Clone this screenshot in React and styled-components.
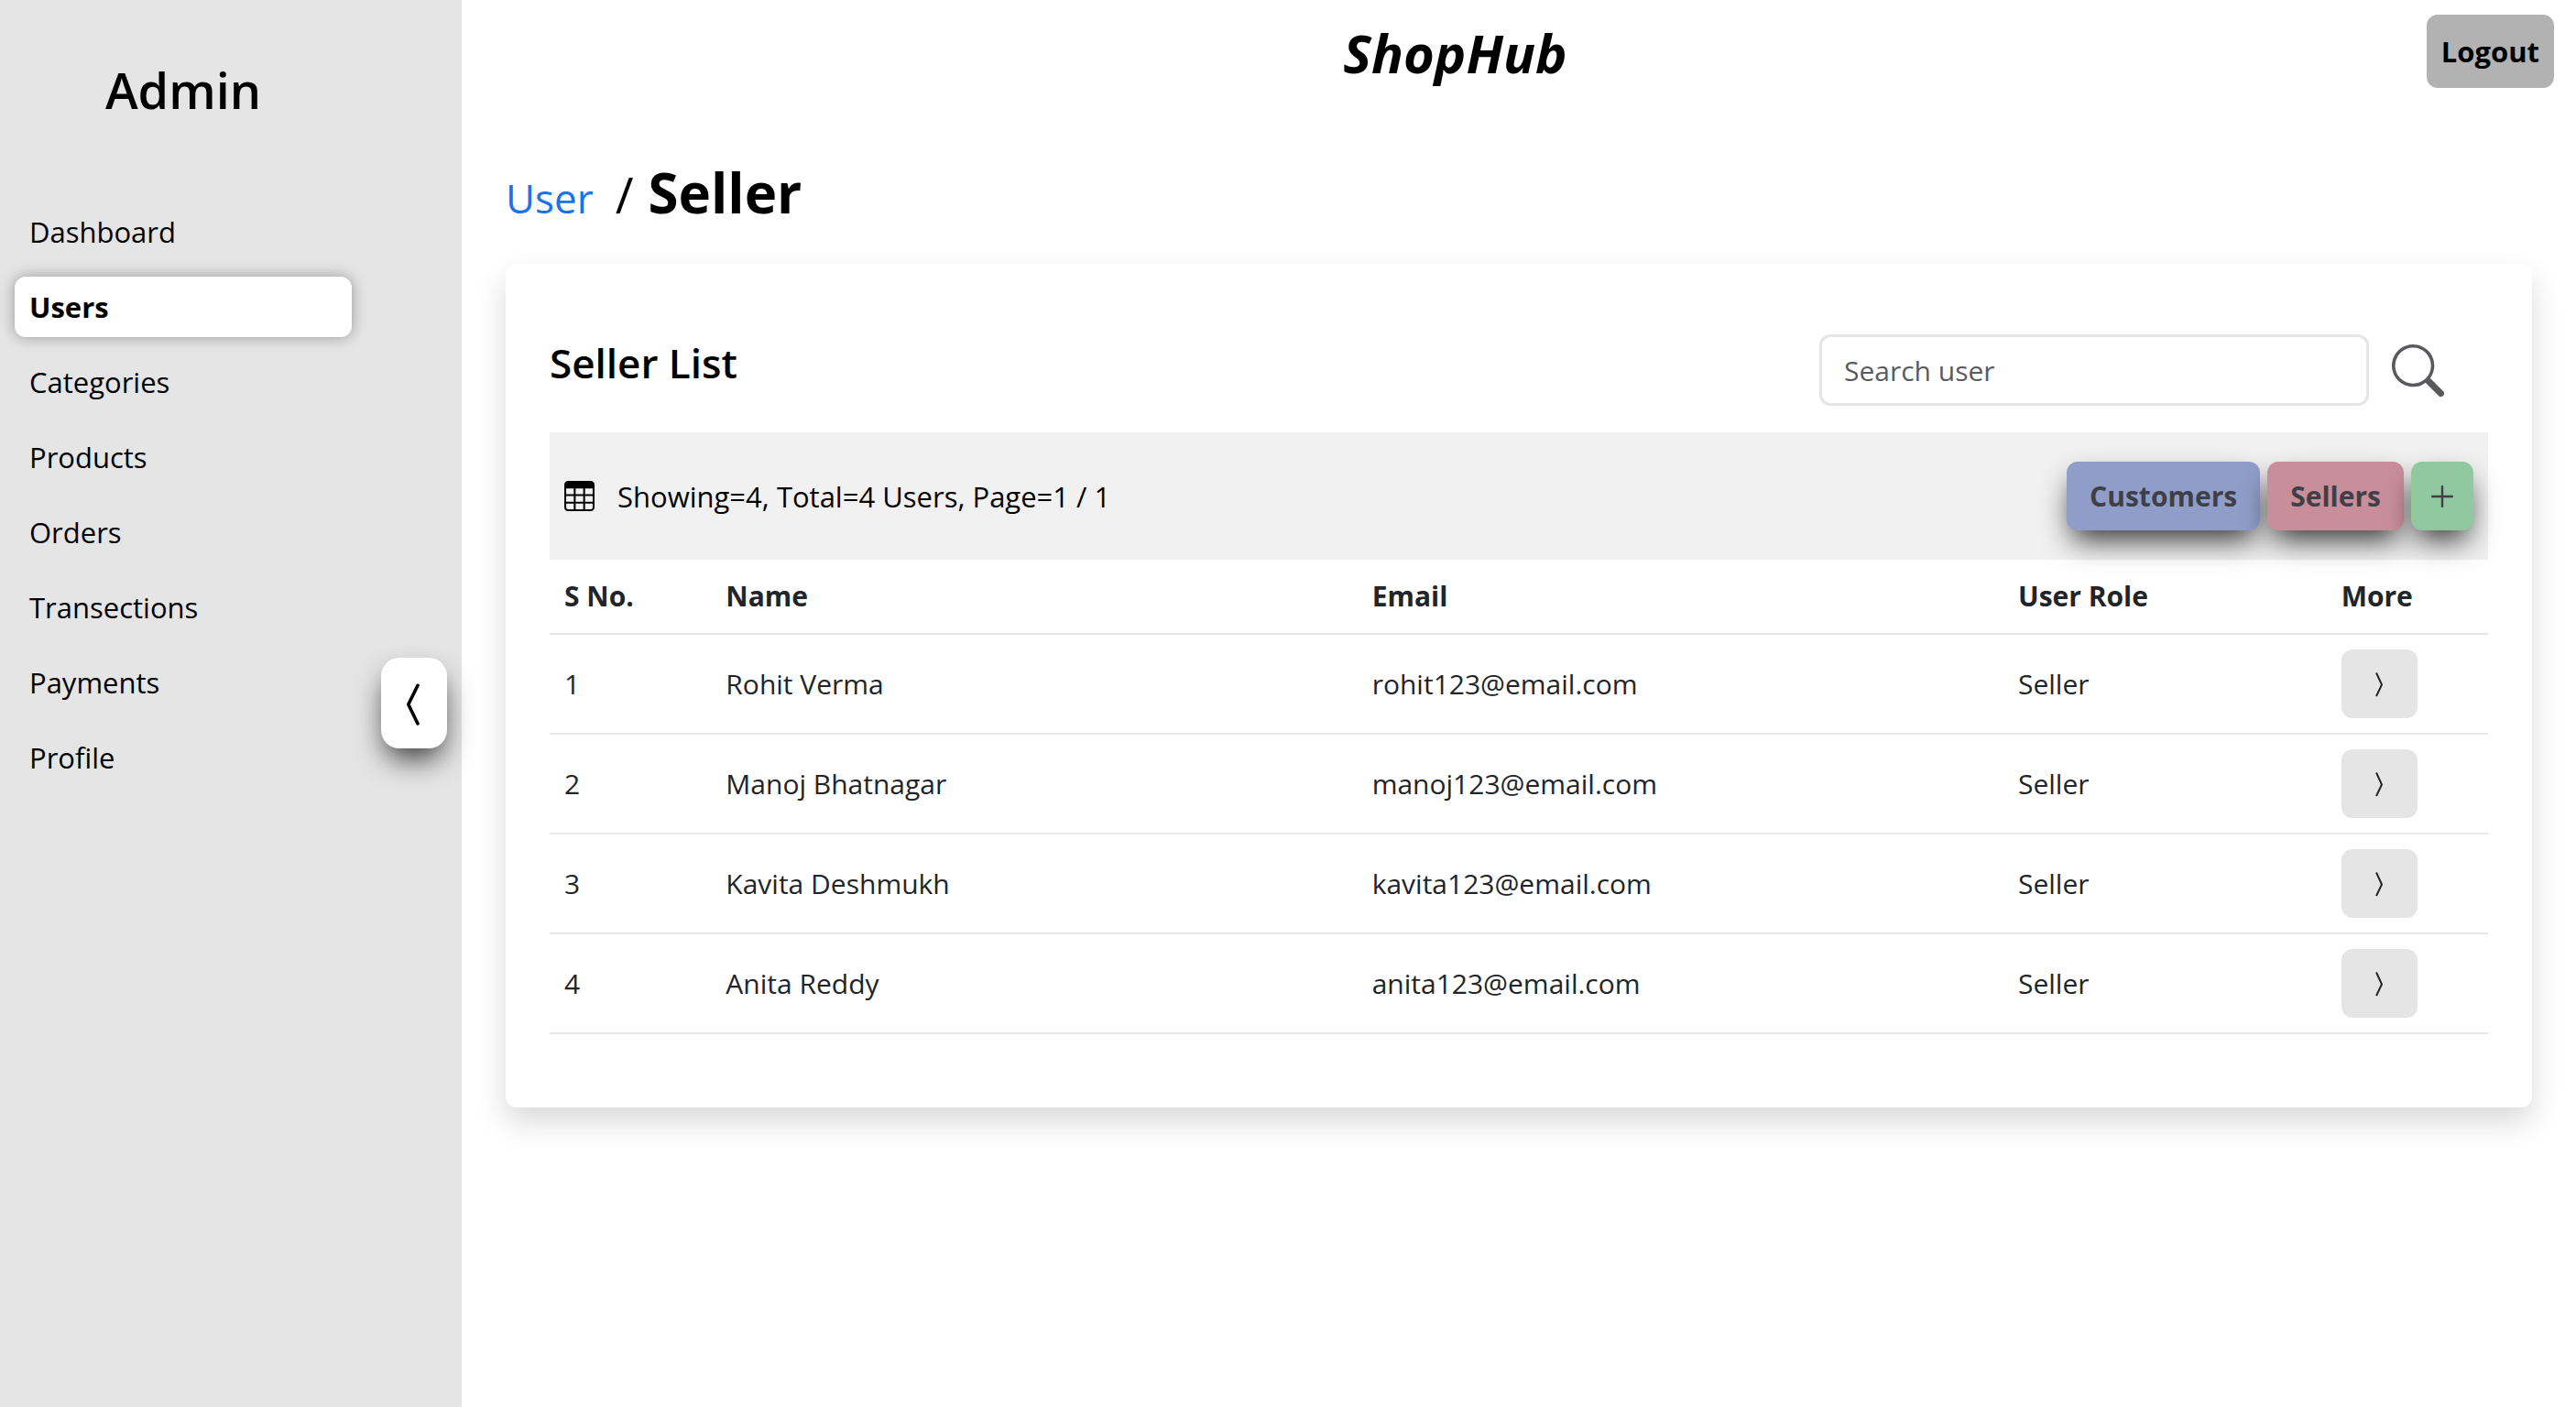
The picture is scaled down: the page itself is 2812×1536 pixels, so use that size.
import React from "react";
import styled, { createGlobalStyle } from "styled-components";
import { BsSearch, BsTable } from "react-icons/bs";

const GlobalStyle = createGlobalStyle`
  *, *::before, *::after { box-sizing: border-box; }
  body {
    margin: 0;
    background: #fff;
    color: #000;
    font-family: "Open Sans", "Noto Sans", sans-serif;
    font-size: 30px;
    line-height: 48px;
  }
  button, input { font: inherit; color: inherit; }
  button { cursor: pointer; }
`;

const Page = styled.div`
  display: flex;
  min-height: 100vh;
`;

const Sidebar = styled.aside`
  position: relative;
  flex: 0 0 504px;
  padding: 62px 120px 0 16px;
  background: #e5e5e5;
`;

const SidebarTitle = styled.h1`
  margin: 0 0 86px;
  font-size: 54px;
  font-weight: 600;
  line-height: 72px;
  text-align: center;
`;

const Nav = styled.nav`
  display: flex;
  flex-direction: column;
  gap: 16px;
`;

const NavLink = styled.a`
  padding: 9px 16px;
  border-radius: 12px;
  font-size: 31px;
  font-weight: ${(p) => (p.$active ? 700 : 400)};
  color: #000;
  text-decoration: none;
  background: ${(p) => (p.$active ? "#fff" : "transparent")};
  box-shadow: ${(p) => (p.$active ? "0 0 16px rgba(0, 0, 0, 0.35)" : "none")};
`;

const CollapseButton = styled.button`
  position: absolute;
  top: calc(50vh - 50px);
  right: 16px;
  display: grid;
  place-items: center;
  width: 72px;
  height: 99px;
  padding: 0;
  border: 0;
  border-radius: 20px;
  background: #fff;
  box-shadow: 0 16px 32px -6px rgba(0, 0, 0, 0.8);
`;

const Main = styled.main`
  flex: 1;
  min-width: 0;
`;

const Header = styled.header`
  display: flex;
  align-items: flex-start;
  padding: 16px 24px;
`;

const Brand = styled.div`
  flex: 1;
  font-size: 58px;
  font-style: italic;
  font-weight: 700;
  line-height: 84px;
  text-align: center;
`;

const LogoutButton = styled.button`
  padding: 16px;
  border: 0;
  border-radius: 12px;
  background: #b2b2b2;
  font-size: 31px;
  font-weight: 700;
`;

const Content = styled.div`
  padding: 58px 48px 48px;
`;

const Breadcrumb = styled.nav`
  display: flex;
  align-items: baseline;
  gap: 16px;
  margin-bottom: 42px;
  line-height: 60px;
`;

const BreadcrumbLink = styled.a`
  padding-right: 8px;
  color: #1a73e8;
  font-size: 44px;
  text-decoration: none;
`;

const BreadcrumbSlash = styled.span`
  font-size: 54px;
`;

const BreadcrumbCurrent = styled.h2`
  margin: 0;
  font-size: 60px;
  font-weight: 700;
  line-height: 72px;
`;

const Card = styled.section`
  padding: 48px 48px 80px;
  border-radius: 12px;
  background: #fff;
  box-shadow: 0 16px 32px rgba(0, 0, 0, 0.15);
`;

const CardHead = styled.div`
  display: flex;
  align-items: flex-start;
  justify-content: space-between;
  padding: 29px 48px 29px 0;
`;

const CardTitle = styled.h3`
  margin: 0;
  font-size: 44px;
  font-weight: 600;
  line-height: 62px;
`;

const SearchForm = styled.form`
  display: flex;
  align-items: center;
  gap: 25px;
`;

const SearchInput = styled.input`
  width: 600px;
  height: 78px;
  padding: 0 24px;
  border: 3px solid #e5e5e5;
  border-radius: 12px;
  outline: 0;
  background: #fff;
  &::placeholder { color: #595c5f; opacity: 1; }
`;

const SearchButton = styled.button`
  display: flex;
  padding: 0;
  border: 0;
  background: none;
  color: #5a5a5e;
  font-size: 57px;
`;

const Summary = styled.div`
  display: flex;
  align-items: center;
  justify-content: space-between;
  padding: 32px 16px;
  background: #f1f1f1;
`;

const SummaryText = styled.div`
  display: flex;
  align-items: center;
  gap: 25px;
  font-size: 31px;
`;

const Actions = styled.div`
  display: flex;
  gap: 8px;
`;

const ActionButton = styled.button`
  display: flex;
  align-items: center;
  height: 75px;
  padding: 0 ${(p) => (p.$compact ? 22 : 25)}px;
  border: 0;
  border-radius: 12px;
  background: ${(p) => p.$color};
  color: #3f3f48;
  font-weight: 700;
  box-shadow: 0 16px 32px -6px rgba(0, 0, 0, 0.8);
`;

const Table = styled.table`
  width: 100%;
  table-layout: fixed;
  border-collapse: separate;
  border-spacing: 0;
  color: #212529;
`;

const Column = styled.col`
  width: calc(100% * ${(p) => p.$span} / 12);
`;

const HeadCell = styled.th`
  padding: 16px;
  border-bottom: 2px solid #e5e5e5;
  font-weight: 700;
  text-align: left;
`;

const Cell = styled.td`
  padding: 16px;
  border-bottom: 2px solid #e8e8e8;
`;

const MoreButton = styled.button`
  display: grid;
  place-items: center;
  width: 83px;
  height: 75px;
  padding: 0;
  border: 0;
  border-radius: 12px;
  background: #e5e5e5;
`;

const navItems = [
  "Dashboard",
  "Users",
  "Categories",
  "Products",
  "Orders",
  "Transections",
  "Payments",
  "Profile",
];

const columns = [
  { label: "S No.", span: 1 },
  { label: "Name", span: 4 },
  { label: "Email", span: 4 },
  { label: "User Role", span: 2 },
  { label: "More", span: 1 },
];

const sellers = [
  { id: 1, name: "Rohit Verma", email: "rohit123@email.com", role: "Seller" },
  { id: 2, name: "Manoj Bhatnagar", email: "manoj123@email.com", role: "Seller" },
  { id: 3, name: "Kavita Deshmukh", email: "kavita123@email.com", role: "Seller" },
  { id: 4, name: "Anita Reddy", email: "anita123@email.com", role: "Seller" },
];

const CollapseIcon = () => (
  <svg width="16" height="48" viewBox="0 0 16 48" fill="none" stroke="#000" strokeWidth="3.6" strokeLinecap="round" strokeLinejoin="round" aria-hidden="true">
    <path d="M12 4.300 L1.800 25 L12 46" />
  </svg>
);

const AngleIcon = () => (
  <svg width="10" height="28" viewBox="0 0 10 28" fill="none" stroke="#212529" strokeWidth="2" aria-hidden="true">
    <path d="M2 1.500 L8 14.500 L2 27" />
  </svg>
);

const PlusIcon = () => (
  <svg width="24" height="24" viewBox="0 0 24 24" fill="none" stroke="currentColor" strokeWidth="2.4" strokeLinecap="round" aria-hidden="true">
    <path d="M12 1 V23 M1 12 H23" />
  </svg>
);

export default function App() {
  return (
    <>
      <GlobalStyle />
      <Page>
        <Sidebar>
          <SidebarTitle>Admin</SidebarTitle>
          <Nav>
            {navItems.map((item) => (
              <NavLink key={item} href={`#${item.toLowerCase()}`} $active={item === "Users"}>
                {item}
              </NavLink>
            ))}
          </Nav>
          <CollapseButton type="button" aria-label="Collapse sidebar">
            <CollapseIcon />
          </CollapseButton>
        </Sidebar>
        <Main>
          <Header>
            <Brand>ShopHub</Brand>
            <LogoutButton type="button">Logout</LogoutButton>
          </Header>
          <Content>
            <Breadcrumb>
              <BreadcrumbLink href="#user">User</BreadcrumbLink>
              <BreadcrumbSlash>/</BreadcrumbSlash>
              <BreadcrumbCurrent>Seller</BreadcrumbCurrent>
            </Breadcrumb>
            <Card>
              <CardHead>
                <CardTitle>Seller List</CardTitle>
                <SearchForm role="search">
                  <SearchInput type="text" aria-label="Search user" placeholder="Search user" />
                  <SearchButton type="button" aria-label="Search">
                    <BsSearch />
                  </SearchButton>
                </SearchForm>
              </CardHead>
              <Summary>
                <SummaryText>
                  <BsTable size={33} />
                  <span>Showing=4, Total=4 Users, Page=1 / 1</span>
                </SummaryText>
                <Actions>
                  <ActionButton type="button" $color="#919dc9">Customers</ActionButton>
                  <ActionButton type="button" $color="#c88f9b">Sellers</ActionButton>
                  <ActionButton type="button" $color="#90c99f" $compact aria-label="Add user">
                    <PlusIcon />
                  </ActionButton>
                </Actions>
              </Summary>
              <Table>
                <colgroup>
                  {columns.map((c) => (
                    <Column key={c.label} $span={c.span} />
                  ))}
                </colgroup>
                <thead>
                  <tr>
                    {columns.map((c) => (
                      <HeadCell key={c.label} scope="col">{c.label}</HeadCell>
                    ))}
                  </tr>
                </thead>
                <tbody>
                  {sellers.map((s) => (
                    <tr key={s.id}>
                      <Cell>{s.id}</Cell>
                      <Cell>{s.name}</Cell>
                      <Cell>{s.email}</Cell>
                      <Cell>{s.role}</Cell>
                      <Cell>
                        <MoreButton type="button" aria-label={`More about ${s.name}`}>
                          <AngleIcon />
                        </MoreButton>
                      </Cell>
                    </tr>
                  ))}
                </tbody>
              </Table>
            </Card>
          </Content>
        </Main>
      </Page>
    </>
  );
}
